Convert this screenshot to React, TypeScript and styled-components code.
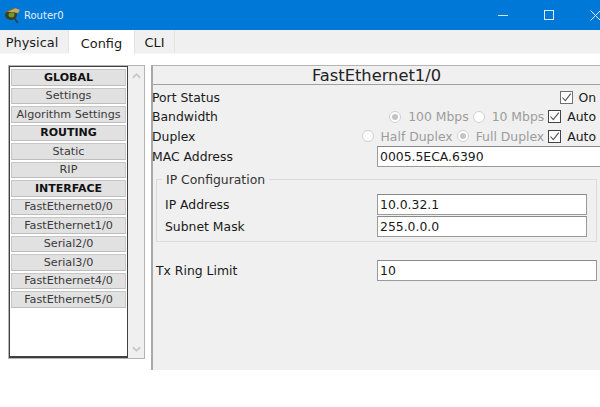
import React from 'react'
import styled, { createGlobalStyle } from 'styled-components'

const GlobalStyle = createGlobalStyle`
	html, body {
		margin: 0;
		padding: 0;
		background: #ffffff;
	}
	* {
		box-sizing: border-box;
	}
`

const Page = styled.div`
	width: 600px;
	height: 407px;
	overflow: hidden;
	font-family: 'DejaVu Sans', sans-serif;
	color: #1a1a1a;
	background: #ffffff;
	display: flex;
	flex-direction: column;
`

const TitleBar = styled.header`
	height: 30px;
	flex: none;
	background: #0078d7;
	display: flex;
	align-items: center;
	padding-left: 3px;
	margin-right: -18px;
	color: #ffffff;
`

const TitleText = styled.span`
	font-size: 10px;
	margin-left: 3px;
	flex: 1;
	color: #e4f1fb;
`

const WindowButton = styled.div`
	width: 46px;
	height: 30px;
	flex: none;
	display: flex;
	align-items: center;
	justify-content: center;
`

const TabBar = styled.nav`
	height: 24px;
	flex: none;
	background: #f0f0f0;
	display: flex;
	align-items: flex-end;
	border-bottom: 1px solid #f7f7f7;
`

const Tab = styled.div<{ $active?: boolean; $width: number; $nudge?: number }>`
	width: ${(props) => props.$width}px;
	height: ${(props) => (props.$active ? 24 : 23)}px;
	font-size: 12.9px;
	padding: 2px ${(props) => props.$nudge ?? 0}px 0 0;
	display: flex;
	align-items: center;
	justify-content: center;
	background: ${(props) => (props.$active ? '#ffffff' : '#f0f0f0')};
	border-right: 1px solid #e3e3e3;
	margin-bottom: ${(props) => (props.$active ? -1 : 0)}px;
`

const Body = styled.main`
	display: flex;
	align-items: flex-start;
	padding: 11px 0 0 8px;
	gap: 6px;
	width: 600px;
`

const ListFrame = styled.aside`
	width: 137px;
	height: 294px;
	flex: none;
	display: flex;
	border: 1px solid #b4b4b4;
`

const List = styled.div`
	width: 119px;
	flex: none;
	background: #ffffff;
	border: 2px solid #404040;
	border-top-width: 1px;
	border-left-width: 1px;
	border-right-width: 1px;
	padding: 2px 1px 0 1px;
	display: flex;
	flex-direction: column;
	gap: 2px;
`

const ListButton = styled.div<{ $heading?: boolean }>`
	height: 16.5px;
	flex: none;
	background: #e1e1e1;
	border: 1px solid #c6c6c6;
	border-bottom-color: #bdbdbd;
	font-size: ${(props) => (props.$heading ? 11 : 11.2)}px;
	font-weight: ${(props) => (props.$heading ? 700 : 400)};
	color: ${(props) => (props.$heading ? '#111111' : '#3a3a3a')};
	display: flex;
	align-items: center;
	justify-content: center;
	white-space: nowrap;
`

const Scrollbar = styled.div`
	flex: 1;
	background: #f0f0f0;
	display: flex;
	flex-direction: column;
	justify-content: space-between;
	align-items: center;
	padding: 6px 0 5px;
`

const Panel = styled.section`
	width: 449px;
	height: 305px;
	flex: none;
	background: #f0f0f0;
	border-left: 2px solid #a8a8a8;
	border-top: 1px solid #b4b4b4;
`

const PanelTitle = styled.h2`
	margin: 0;
	height: 19px;
	font-size: 16.3px;
	font-weight: 400;
	line-height: 19px;
	text-align: center;
	border-bottom: 1px solid #a0a0a0;
	color: #222222;
`

const Form = styled.div`
	display: flex;
	flex-direction: column;
	padding-top: 2.5px;
	margin-left: -1px;
`

const Row = styled.div`
	height: 19.5px;
	display: flex;
	align-items: center;
	font-size: 12.4px;
	white-space: nowrap;
`

const RowLabel = styled.span`
	margin-right: auto;
`

const OptionText = styled.span<{ $muted?: boolean; $left?: number }>`
	color: ${(props) => (props.$muted ? '#9c9c9c' : '#1a1a1a')};
	margin: 0 4px 0 ${(props) => props.$left ?? 7}px;
`

const Radio = styled.span<{ $checked?: boolean }>`
	width: 12px;
	height: 12px;
	border-radius: 50%;
	flex: none;
	border: 1px solid #d0d0d0;
	background: #ffffff;
	display: flex;
	align-items: center;
	justify-content: center;

	&::after {
		content: '';
		width: 6px;
		height: 6px;
		border-radius: 50%;
		background: ${(props) => (props.$checked ? '#c4c4c4' : 'transparent')};
	}
`

const CheckFrame = styled.span<{ $muted?: boolean }>`
	width: 13px;
	height: 13px;
	flex: none;
	border: 1px solid ${(props) => (props.$muted ? '#707070' : '#444444')};
	background: #ffffff;
	display: flex;
	align-items: center;
	justify-content: center;
`

const AddressRow = styled.div<{ $indent: number; $top: number; $labelWidth: number; $inputWidth: number }>`
	display: flex;
	align-items: center;
	height: 21px;
	flex: none;
	margin-top: ${(props) => props.$top}px;
	padding-left: ${(props) => props.$indent}px;
	font-size: 12.4px;
	white-space: nowrap;

	& > span {
		width: ${(props) => props.$labelWidth}px;
		flex: none;
	}

	& > div {
		width: ${(props) => props.$inputWidth}px;
	}
`

const TextBox = styled.div`
	height: 100%;
	flex: none;
	background: #ffffff;
	border: 1px solid #9a9a9a;
	border-top-color: #8a8a8a;
	padding-left: 2px;
	display: flex;
	align-items: center;
	color: #1a1a1a;
`

const FieldSet = styled.fieldset`
	margin: 5px 0 0 4px;
	padding: 0;
	width: 441px;
	height: 70px;
	border: 1px solid #dcdcdc;
	display: flex;
	flex-direction: column;
`

const Legend = styled.legend`
	margin-left: 5px;
	padding: 0 4px 0 4px;
	font-size: 12.4px;
	line-height: 15px;
	color: #333333;
`

const Check = ({ muted }: { muted?: boolean }) => (
	<CheckFrame $muted={muted}>
		<svg width="11" height="11" viewBox="0 0 11 11" fill="none">
			<path d="M1.5 5.5 L4.3 8.6 L9.8 1.6" stroke="#555555" strokeWidth="1.1" />
		</svg>
	</CheckFrame>
)

const RouterIcon = () => (
	<svg width="18" height="18" viewBox="0 0 18 18">
		<path d="M11 12 L15 17" stroke="#333c4a" strokeWidth="1.6" />
		<ellipse cx="8" cy="9" rx="6" ry="5" fill="#3b3f22" />
		<ellipse cx="8.5" cy="9" rx="3" ry="2.4" fill="#6f9a2c" />
		<path d="M3 6 L12 2 L17 4 L15 7 L8 6 Z" fill="#c9a860" />
		<path d="M3 6 L12 2" stroke="#7d6a35" strokeWidth="1" />
	</svg>
)

const Chevron = ({ up }: { up?: boolean }) => (
	<svg width="9" height="7" viewBox="0 0 10 7" fill="none">
		<path d={up ? 'M1 6 L5 2 L9 6' : 'M1 1 L5 5 L9 1'} stroke="#c8c8c8" strokeWidth="2" />
	</svg>
)

const listItems = [
	{ label: 'GLOBAL', heading: true },
	{ label: 'Settings' },
	{ label: 'Algorithm Settings' },
	{ label: 'ROUTING', heading: true },
	{ label: 'Static' },
	{ label: 'RIP' },
	{ label: 'INTERFACE', heading: true },
	{ label: 'FastEthernet0/0' },
	{ label: 'FastEthernet1/0' },
	{ label: 'Serial2/0' },
	{ label: 'Serial3/0' },
	{ label: 'FastEthernet4/0' },
	{ label: 'FastEthernet5/0' },
]

const App = () => {
	return (
		<Page>
			<GlobalStyle />
			<TitleBar>
				<RouterIcon />
				<TitleText>Router0</TitleText>
				<WindowButton>
					<svg width="11" height="11" viewBox="0 0 11 11">
						<path d="M0 5.5 H10" stroke="#cfe4f6" strokeWidth="1" />
					</svg>
				</WindowButton>
				<WindowButton>
					<svg width="11" height="11" viewBox="0 0 11 11" fill="none">
						<rect x="0.5" y="0.5" width="9" height="9" stroke="#dcecf8" />
					</svg>
				</WindowButton>
				<WindowButton>
					<svg width="11" height="11" viewBox="0 0 11 11">
						<path d="M0.5 0.5 L10.5 10.5 M10.5 0.5 L0.5 10.5" stroke="#dcecf8" />
					</svg>
				</WindowButton>
			</TitleBar>
			<TabBar>
				<Tab $width={69} $nudge={4}>
					Physical
				</Tab>
				<Tab $width={66} $active>
					Config
				</Tab>
				<Tab $width={40}>CLI</Tab>
			</TabBar>
			<Body>
				<ListFrame>
					<List>
						{listItems.map((x) => (
							<ListButton key={x.label} $heading={x.heading}>
								{x.label}
							</ListButton>
						))}
					</List>
					<Scrollbar>
						<Chevron up />
						<Chevron />
					</Scrollbar>
				</ListFrame>
				<Panel>
					<PanelTitle>FastEthernet1/0</PanelTitle>
					<Form>
						<Row>
							<RowLabel>Port Status</RowLabel>
							<Check muted />
							<OptionText $left={5}>On</OptionText>
						</Row>
						<Row>
							<RowLabel>Bandwidth</RowLabel>
							<Radio $checked />
							<OptionText $muted>100 Mbps</OptionText>
							<Radio />
							<OptionText $muted>10 Mbps</OptionText>
							<Check />
							<OptionText $left={6}>Auto</OptionText>
						</Row>
						<Row>
							<RowLabel>Duplex</RowLabel>
							<Radio />
							<OptionText $muted>Half Duplex</OptionText>
							<Radio $checked />
							<OptionText $muted>Full Duplex</OptionText>
							<Check />
							<OptionText $left={6}>Auto</OptionText>
						</Row>
						<AddressRow $indent={0} $top={0} $labelWidth={225} $inputWidth={230}>
							<span>MAC Address</span>
							<TextBox>0005.5ECA.6390</TextBox>
						</AddressRow>
						<FieldSet>
							<Legend>IP Configuration</Legend>
							<AddressRow $indent={8} $top={7} $labelWidth={212} $inputWidth={210}>
								<span>IP Address</span>
								<TextBox>10.0.32.1</TextBox>
							</AddressRow>
							<AddressRow $indent={8} $top={1} $labelWidth={212} $inputWidth={210}>
								<span>Subnet Mask</span>
								<TextBox>255.0.0.0</TextBox>
							</AddressRow>
						</FieldSet>
						<AddressRow $indent={4} $top={18} $labelWidth={221} $inputWidth={220}>
							<span>Tx Ring Limit</span>
							<TextBox>10</TextBox>
						</AddressRow>
					</Form>
				</Panel>
			</Body>
		</Page>
	)
}

export default App
